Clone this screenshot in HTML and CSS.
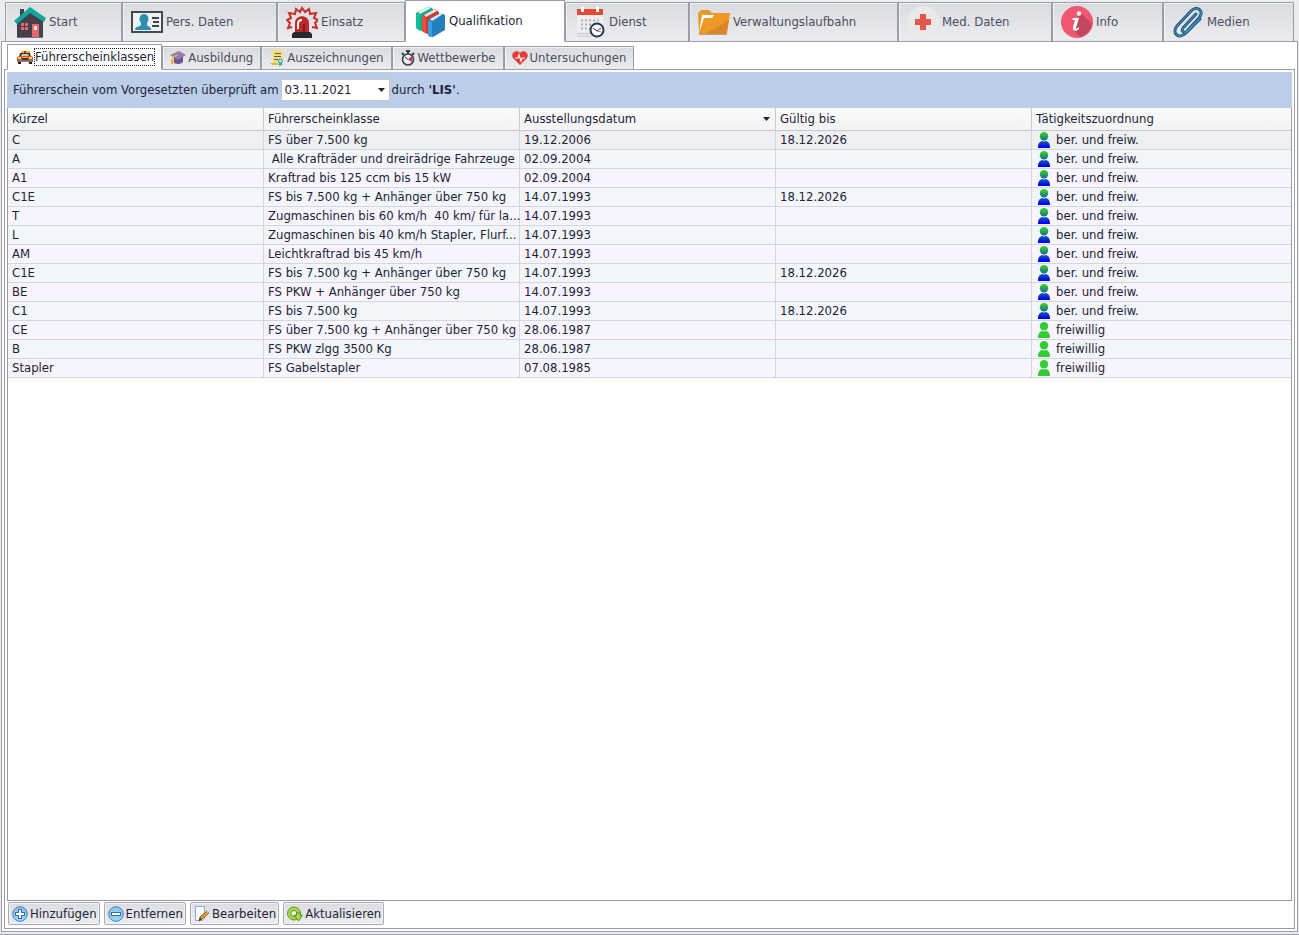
FILE: index.html
```html
<!DOCTYPE html>
<html lang="de">
<head>
<meta charset="utf-8">
<title>Qualifikation – Führerscheinklassen</title>
<link rel="stylesheet" href="styles.css">
</head>
<body>
<svg class="defs" aria-hidden="true">
  <defs>
    <linearGradient id="duo" x1="0" y1="0" x2="0" y2="16" gradientUnits="userSpaceOnUse"><stop offset="0.1" stop-color="#32c832"/><stop offset="0.55" stop-color="#19649b"/><stop offset="0.95" stop-color="#0000ff"/></linearGradient>
    <linearGradient id="ball" x1="0" y1="0" x2="0" y2="1"><stop offset="0" stop-color="#8dbfeb"/><stop offset="1" stop-color="#9ed6f8"/></linearGradient>
    <symbol id="person" viewBox="0 0 14 16"><circle cx="7" cy="4.300" r="4.200"/><path d="M1 16c0-4 1-6 4-7l2 .5L9 9c3 1 4 3 4 7z"/></symbol>
  </defs>
</svg>
<div class="window">
  <div class="main-tabs" role="tablist" aria-label="Bereiche">
    <button class="main-tab t-start" role="tab">
      <svg class="icon-l" viewBox="0 0 32 32"><path d="M3 15L16 6l13 9v17H3z" fill="#46404c"/><path d="M6 3h4v7H6z" fill="#46404c"/><path d="M0 15L16 1l16 11-2 4L16 7 3 18z" fill="#0aa89a"/><path d="M7 17h7v7H7zM18 18h7v14h-7z" fill="#e06a6c"/><path d="M10.500 17v7M7 20.500h7" stroke="#46404c"/><path d="M20 20h3v4h-3z" fill="#f8dcdc"/><path d="M3 31.500h26" stroke="#77747c"/></svg>
      <span>Start</span></button>
    <button class="main-tab t-person" role="tab">
      <svg class="icon-l" viewBox="0 0 32 32"><path d="M1 6h30v20H1z" fill="#f0f1f3" stroke="#444b50" stroke-width="2"/><path d="M4 24c0-4 5-3 6-5v-2c-3-4-1-9 3-9s6 5 3 9v2c1 2 4 1 4 5z" fill="#2a8fae"/><path d="M21 12h7M22 16h6M21 20h7" stroke="#3d464b" stroke-width="2"/></svg>
      <span>Pers. Daten</span></button>
    <button class="main-tab t-einsatz" role="tab">
      <svg class="icon-l" viewBox="0 0 32 32"><path d="M6 21l-4 1 2-5-3-3 4-2-2-5 6 1 1-5 4 3 2-4 3 4 4-3 1 5 6-1-2 5 4 2-3 3 2 5-5-1" fill="none" stroke="#c5302e" stroke-width="2"/><path d="M9 26v-9c0-9 14-9 14 0v9z" fill="#bd2a2a"/><path d="M12 23v-5c0-3 2-4 4-4" fill="none" stroke="#fff" stroke-width="2"/><path d="M17 18h2v8h-2z" fill="#80191e"/><path d="M6 32v-4l2-2h16l2 2v4z" fill="#29292b"/></svg>
      <span>Einsatz</span></button>
    <button class="main-tab main-tab-active t-quali" role="tab" aria-selected="true">
      <svg class="icon-l" viewBox="0 0 32 32"><path d="M2 8L15 1l4 3v17L7 26l-5-3z" fill="#19ab92"/><path d="M4 7L15 1l2 2L6 9z" fill="#d8f4ee"/><path d="M2 8l4 2v16l-4-3z" fill="#12bd9e"/><path d="M8 11l13-7 4 3v17l-12 5-5-3z" fill="#c83e32"/><path d="M10 10l11-6 2 2-11 6z" fill="#f5dddd"/><path d="M8 11l4 2v15l-4-2z" fill="#e84f3c"/><path d="M14 15l13-7 4 2v15l-12 7-5-1z" fill="#267fbd"/><path d="M16 14l11-6 2 1-11 7z" fill="#def0fc"/><path d="M14 15l4 2v15l-4-1z" fill="#3b9de0"/></svg>
      <span>Qualifikation</span></button>
    <button class="main-tab t-dienst" role="tab">
      <svg class="icon-l" viewBox="0 0 32 32"><path d="M3 9h26v22H3z" fill="#eeeef0"/><path d="M3 3h26v6H3z" fill="#e6492f"/><path d="M8.500 1v5M23.500 1v5" stroke="#fff" stroke-width="3"/><path d="M7 14.500h19M7 18.500h19M7 22.500h9" stroke="#afafb2" stroke-width="2" stroke-dasharray="2 2"/><path d="M3 27.500h14M3 30h14" stroke="#c4c4c8"/><circle cx="23" cy="24" r="6.500" fill="#fff" stroke="#27394b" stroke-width="2"/><path d="M19 22l4 3 4-3" fill="none" stroke="#27394b"/><path d="M23 25l4 1" stroke="#d65b4c"/></svg>
      <span>Dienst</span></button>
    <button class="main-tab t-laufbahn" role="tab">
      <svg class="icon-l" viewBox="0 0 32 32"><path d="M0 7l3-3h8l3 3h18l-3 21H1z" fill="#ec9925"/><path d="M1 27L4 9h12l-2 3H6z" fill="#fff"/><path d="M2 28L7 12h8l2-2h14l-3 18z" fill="#ec9925"/><path d="M31 14l-3 14H7z" fill="#d98528"/><path d="M1 28.500h28" stroke="#b9a07c"/></svg>
      <span>Verwaltungslaufbahn</span></button>
    <button class="main-tab t-med" role="tab">
      <svg class="icon-l" viewBox="0 0 32 32"><circle cx="16" cy="16" r="16" fill="#e9e9e9"/><path d="M13 8h6v5h5v6h-5v5h-6v-5H8v-6h5z" fill="#e2574c"/></svg>
      <span>Med. Daten</span></button>
    <button class="main-tab t-info" role="tab">
      <svg class="icon-l" viewBox="0 0 32 32"><circle cx="16" cy="16" r="16" fill="#f15770"/><path d="M19 6l12 12a16 16 0 0 1-12 13l-6-6z" fill="#c2475f"/><path d="M12 12h6l-3 10c0 1 1 1 3-1v2c-3 3-7 2-6-2l2-7h-3z" fill="#fff"/><circle cx="18" cy="7.500" r="2.200" fill="#fff"/></svg>
      <span>Info</span></button>
    <button class="main-tab t-medien" role="tab">
      <svg class="icon-l" viewBox="0 0 32 32"><path d="M24 8L11 22c-2 3 1 6 4 3l12-13c6-7-2-13-8-7L5 20c-6 7 2 14 9 7l14-14" fill="none" stroke="#22577d" stroke-width="3" stroke-linecap="round"/><path d="M24 8L11 22c-2 3 1 6 4 3l12-13c6-7-2-13-8-7L5 20c-6 7 2 14 9 7l14-14" fill="none" stroke="#4d9cc9" stroke-linecap="round"/></svg>
      <span>Medien</span></button>
  </div>

  <main class="page">
    <div class="sub-tabs" role="tablist" aria-label="Qualifikation">
      <button class="sub-tab sub-tab-active" role="tab" aria-selected="true">
        <svg class="icon-s" viewBox="0 0 16 16"><path d="M4 2h9v2H4z" fill="#f5b021"/><path d="M7 2h2v2H7z" fill="#c61d1d"/><path d="M3 4h10l1 4H2z" fill="#43302e"/><path d="M5 5h6l1 2H4z" fill="#b9c9d6"/><path d="M0 8l2-1h12l2 1v5H0z" fill="#d8522a"/><path d="M1 8h3v2H1zM12 8h3v2h-3z" fill="#fde34d"/><path d="M5 8h6v1H5z" fill="#f4a23c"/><path d="M5 9h6v2H5z" fill="#46352f"/><path d="M0 11h16v2H0z" fill="#8b7772"/><path d="M1 13h3v2H1zM12 13h3v2h-3z" fill="#241d1d"/></svg>
        <span class="focus-label">Führerscheinklassen</span></button>
      <button class="sub-tab" role="tab">
        <svg class="icon-s" viewBox="0 0 16 16"><path d="M4 7v6c3 2 7 1 9-1V7z" fill="#6b5690"/><path d="M0 5l9-4 7 4-8 5z" fill="#917bb4"/><path d="M8 5L3 7l-1 5" fill="none" stroke="#edab3d" stroke-width="1.500"/><path d="M1 10h3l-1 4H1z" fill="#edab3d"/></svg>
        <span>Ausbildung</span></button>
      <button class="sub-tab" role="tab">
        <svg class="icon-s" viewBox="0 0 16 16"><path d="M3 0h11v15H4l-2-2h2z" fill="#f5df78"/><path d="M1 13h8v2H3z" fill="#dbb952"/><path d="M6 3.500h6M5 6.500h7M5 9.500h4" stroke="#555b62"/><circle cx="11.500" cy="11" r="2" fill="#b5e4f3" stroke="#299dba"/><path d="M10 13h3v3l-1.500-1L10 16z" fill="#299dba"/></svg>
        <span>Auszeichnungen</span></button>
      <button class="sub-tab" role="tab">
        <svg class="icon-s" viewBox="0 0 16 16"><path d="M6 1h4M8 1v3M2 3l2 2M14 3l-2 2" stroke="#2d3e4f" stroke-width="2"/><circle cx="8" cy="9.500" r="5.500" fill="#eceff1" stroke="#34434e" stroke-width="1.600"/><path d="M8 9.500L12 6v6z" fill="#d62e2e"/><path d="M8 9.500L5 7" stroke="#333"/></svg>
        <span>Wettbewerbe</span></button>
      <button class="sub-tab" role="tab">
        <svg class="icon-s" viewBox="0 0 16 16"><path d="M8 15L1 8c-3-5 4-9 7-5 3-4 10 0 7 5z" fill="#ea3935"/><path d="M3 8h3l1-3 2 6 1-3h3" fill="none" stroke="#fff" stroke-width="1.200"/></svg>
        <span>Untersuchungen</span></button>
    </div>

    <section class="panel">
      <div class="review-bar">
        <label for="review-date">Führerschein vom Vorgesetzten überprüft am</label>
        <select id="review-date" class="date-select"><option>03.11.2021</option></select>
        <span>durch <b>'LIS'</b>.</span>
      </div>
      <div class="grid-box">
        <table class="grid">
          <colgroup><col class="col"><col class="col"><col class="col"><col class="col"><col></colgroup>
          <thead><tr><th>Kürzel</th><th>Führerscheinklasse</th><th aria-sort="descending"><span class="sorted">Ausstellungsdatum<svg class="arrow" viewBox="0 0 7 4"><path d="M0 0h7L3.500 4z"/></svg></span></th><th>Gültig bis</th><th>Tätigkeitszuordnung</th></tr></thead>
          <tbody>
            <tr class="selected"><td>C</td><td>FS über 7.500 kg</td><td>19.12.2006</td><td>18.12.2026</td><td><span class="who"><svg class="person duo"><use href="#person"/></svg>ber. und freiw.</span></td></tr>
            <tr><td>A</td><td>&nbsp;Alle Krafträder und dreirädrige Fahrzeuge</td><td>02.09.2004</td><td></td><td><span class="who"><svg class="person duo"><use href="#person"/></svg>ber. und freiw.</span></td></tr>
            <tr><td>A1</td><td>Kraftrad bis 125 ccm bis 15 kW</td><td>02.09.2004</td><td></td><td><span class="who"><svg class="person duo"><use href="#person"/></svg>ber. und freiw.</span></td></tr>
            <tr><td>C1E</td><td>FS bis 7.500 kg + Anhänger über 750 kg</td><td>14.07.1993</td><td>18.12.2026</td><td><span class="who"><svg class="person duo"><use href="#person"/></svg>ber. und freiw.</span></td></tr>
            <tr><td>T</td><td>Zugmaschinen bis 60 km/h&nbsp; 40 km/ für la...</td><td>14.07.1993</td><td></td><td><span class="who"><svg class="person duo"><use href="#person"/></svg>ber. und freiw.</span></td></tr>
            <tr><td>L</td><td>Zugmaschinen bis 40 km/h Stapler, Flurf...</td><td>14.07.1993</td><td></td><td><span class="who"><svg class="person duo"><use href="#person"/></svg>ber. und freiw.</span></td></tr>
            <tr><td>AM</td><td>Leichtkraftrad bis 45 km/h</td><td>14.07.1993</td><td></td><td><span class="who"><svg class="person duo"><use href="#person"/></svg>ber. und freiw.</span></td></tr>
            <tr><td>C1E</td><td>FS bis 7.500 kg + Anhänger über 750 kg</td><td>14.07.1993</td><td>18.12.2026</td><td><span class="who"><svg class="person duo"><use href="#person"/></svg>ber. und freiw.</span></td></tr>
            <tr><td>BE</td><td>FS PKW + Anhänger über 750 kg</td><td>14.07.1993</td><td></td><td><span class="who"><svg class="person duo"><use href="#person"/></svg>ber. und freiw.</span></td></tr>
            <tr><td>C1</td><td>FS bis 7.500 kg</td><td>14.07.1993</td><td>18.12.2026</td><td><span class="who"><svg class="person duo"><use href="#person"/></svg>ber. und freiw.</span></td></tr>
            <tr><td>CE</td><td>FS über 7.500 kg + Anhänger über 750 kg</td><td>28.06.1987</td><td></td><td><span class="who"><svg class="person"><use href="#person"/></svg>freiwillig</span></td></tr>
            <tr><td>B</td><td>FS PKW zlgg 3500 Kg</td><td>28.06.1987</td><td></td><td><span class="who"><svg class="person"><use href="#person"/></svg>freiwillig</span></td></tr>
            <tr><td>Stapler</td><td>FS Gabelstapler</td><td>07.08.1985</td><td></td><td><span class="who"><svg class="person"><use href="#person"/></svg>freiwillig</span></td></tr>
          </tbody>
        </table>
      </div>
      <div class="actions">
        <button class="action"><svg class="icon-s" viewBox="0 0 16 16"><circle cx="8" cy="8" r="7.300" fill="url(#ball)" stroke="#3f7fbd"/><path d="M8 3v10M3 8h10" stroke="#2f70b4" stroke-width="4"/><path d="M8 4v8M4 8h8" stroke="#fff" stroke-width="2"/></svg><span>Hinzufügen</span></button>
        <button class="action"><svg class="icon-s" viewBox="0 0 16 16"><circle cx="8" cy="8" r="7.300" fill="url(#ball)" stroke="#3f7fbd"/><path d="M3 8h10" stroke="#2f70b4" stroke-width="4"/><path d="M4 8h8" stroke="#fff" stroke-width="2"/></svg><span>Entfernen</span></button>
        <button class="action"><svg class="icon-s" viewBox="0 0 16 16"><path d="M1.500.5h9v12l-2 2h-7z" fill="#f7fbff" stroke="#8aaad4"/><path d="M5 15l1-4 7-6 2 2-7 6z" fill="#e8a03a" stroke="#8a5420"/><path d="M12 5l1-1 2 2-1 2z" fill="#ccb6a0"/><path d="M5 15l1-3 2 1z" fill="#403028"/></svg><span>Bearbeiten</span></button>
        <button class="action"><svg class="icon-s" viewBox="0 0 16 16"><circle cx="7" cy="7.500" r="6.500" fill="#a6d64c" stroke="#5c9620"/><circle cx="7" cy="7.500" r="3" fill="#f2f6ea" stroke="#5c9620"/><path d="M7 8h4v3H8z" fill="#a6d64c"/><path d="M7 9.500h2.500V7h4v2.500h2L11.500 15z" fill="#a6d64c" stroke="#5c9620"/></svg><span>Aktualisieren</span></button>
      </div>
    </section>
  </main>
</div>
</body>
</html>
```
FILE: styles.css
```css
* { box-sizing: border-box; }

body {
  margin: 0;
  background: #ebecef;
  color: #1e1f39;
  font: 13px/16px "DejaVu Sans Condensed", "DejaVu Sans", sans-serif;
}

button, select { font: inherit; color: inherit; margin: 0; }
button { cursor: pointer; }
svg { display: block; flex: none; }
.defs { position: absolute; width: 0; height: 0; }

.window {
  display: flex;
  flex-direction: column;
  min-height: 100vh;
  padding: 0 1px 2px;
  border-bottom: 1px solid #a0a1ae;
}

/* Main tabs */
.main-tabs {
  display: flex;
  align-items: flex-end;
  height: 42px;
  padding: 0 4px;
  margin-bottom: -1px;
}
.main-tab {
  display: flex;
  align-items: center;
  gap: 3px;
  height: 40px;
  padding: 0 8px;
  border: 1px solid #9b9caa;
  background: linear-gradient(#dadbdf, #ebecef);
  box-shadow: inset 1px 1px #f1f2f4;
  color: #4c4c5f;
  white-space: nowrap;
}
.main-tab-active {
  position: relative;
  height: 42px;
  padding-bottom: 1px;
  border-bottom-color: #fff;
  background: #fff;
  box-shadow: none;
  color: #1e1f39;
}
.t-start { flex: 117 1 117px; }
.t-person { flex: 155 1 155px; }
.t-einsatz { flex: 128 1 128px; }
.t-quali { flex: 160 1 160px; }
.t-dienst { flex: 124 1 124px; }
.t-laufbahn { flex: 209 1 209px; }
.t-med { flex: 154 1 154px; }
.t-info { flex: 111 1 111px; }
.t-medien { flex: 131 1 131px; }
.icon-l { width: 32px; height: 32px; }
.icon-s { width: 16px; height: 16px; }

.page {
  flex: 1;
  display: flex;
  flex-direction: column;
  padding: 2px;
  border: 1px solid #9b9caa;
  background: #fff;
}

/* Sub tabs */
.sub-tabs {
  display: flex;
  align-items: flex-end;
  height: 26px;
  padding: 0 3px;
  margin-bottom: -1px;
}
.sub-tab {
  display: flex;
  align-items: center;
  gap: 2px;
  height: 24px;
  padding: 0 7px;
  border: 1px solid #9b9caa;
  background: linear-gradient(#dadbdf, #ebecef);
  box-shadow: inset 1px 1px #f1f2f4;
  color: #4c4c5f;
  white-space: nowrap;
}
.sub-tab-active {
  position: relative;
  height: 26px;
  padding-left: 9px;
  border-bottom-color: #fff;
  background: #fff;
  box-shadow: none;
  color: #1e1f39;
}
.focus-label { outline: 1px dotted #1e1f39; }

/* Panel */
.panel {
  flex: 1;
  display: flex;
  flex-direction: column;
  padding: 2px;
  border: 1px solid #9b9caa;
}
.review-bar {
  display: flex;
  align-items: center;
  gap: 2px;
  height: 36px;
  padding: 0 6px;
  background: #bccde8;
}
.date-select {
  appearance: none;
  width: 109px;
  height: 22px;
  padding: 0 3px;
  border: 1px solid #c5c6ce;
  border-radius: 0;
  background: #fff url("data:image/svg+xml,%3Csvg xmlns='http://www.w3.org/2000/svg' width='7' height='4'%3E%3Cpath d='M0 0h7L3.500 4z' fill='%231e1f39'/%3E%3C/svg%3E") no-repeat right 4px center;
}

/* Grid */
.grid-box {
  flex: 1;
  border: 1px solid #9b9caa;
  border-top: 0;
}
.grid {
  width: 100%;
  table-layout: fixed;
  border-collapse: separate;
  border-spacing: 0;
}
.col { width: 256px; }
.grid th, .grid td {
  padding: 0 0 0 4px;
  border-right: 1px solid #d5d6dd;
  border-bottom: 1px solid #d5d6dd;
  text-align: left;
  font-weight: normal;
  white-space: nowrap;
}
.grid th {
  height: 23px;
  border-color: #c6c7d0;
  background: linear-gradient(#fafafa, #f2f3f4);
}
.grid td { height: 19px; line-height: 18px; }
.grid th:last-child, .grid td:last-child { border-right: 0; }
.grid tr:nth-child(even) td { background: #f2f5fa; }
.grid tr:nth-child(odd) td { background: #f7f4fd; }
.grid tr.selected:first-child td { background: #eeeff0; }
.sorted { display: flex; align-items: center; justify-content: space-between; padding-right: 5px; }
.arrow { width: 7px; height: 4px; fill: #1e1f39; }
.who { display: flex; align-items: center; gap: 5px; padding-left: 1px; }
.person { width: 14px; height: 16px; fill: #32cd32; }
.duo { fill: url(#duo); }

/* Actions */
.actions { display: flex; gap: 4px; padding: 1px; }
.action {
  display: flex;
  align-items: center;
  gap: 2px;
  height: 23px;
  padding: 0 2px 0 3px;
  border: 1px solid #a9aab5;
  border-radius: 2px;
  background: linear-gradient(#dcdde1, #ebecef);
  box-shadow: inset 0 0 0 1px #f1f2f5;
  white-space: nowrap;
}
```
